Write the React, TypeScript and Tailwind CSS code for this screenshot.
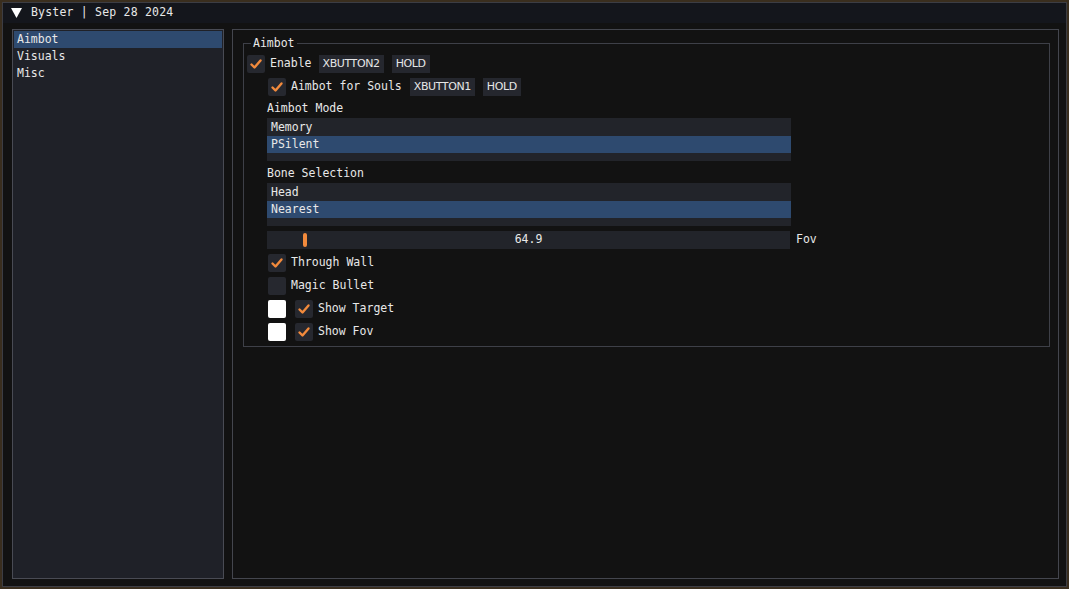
import React from 'react';

const mono = { fontFamily: '"DejaVu Sans Mono", "Liberation Mono", monospace' };

const Check: React.FC<{ on?: boolean }> = ({ on }) => (
  <div className="w-[18px] h-[18px] bg-[#26282f] rounded-[2px] flex items-center justify-center shrink-0">
    {on && (
      <svg width="14" height="14" viewBox="0 0 14 14">
        <polyline points="2.5,7.5 5.5,10.5 11.5,3.5" fill="none" stroke="#f28a3c" strokeWidth="2.4" strokeLinecap="round" strokeLinejoin="round" />
      </svg>
    )}
  </div>
);

const KeyBtn: React.FC<{ label: string }> = ({ label }) => (
  <div className="h-[18px] px-[4px] bg-[#25272e] flex items-center text-[11px] text-[#e6e6e6] font-['DejaVu_Sans',sans-serif] tracking-[-0.4px]">
    {label}
  </div>
);

const ListBox: React.FC<{ items: string[]; sel: number }> = ({ items, sel }) => (
  <div className="w-[524px] h-[43px] bg-[#22242a] pt-[1px]">
    {items.map((it, i) => (
      <div key={it} className={`h-[17px] px-[4px] flex items-center ${i === sel ? 'bg-[#2e4a6f]' : ''}`}>
        {it}
      </div>
    ))}
  </div>
);

export default function App() {
  const tabs = ['Aimbot', 'Visuals', 'Misc'];
  return (
    <div className="w-[1069px] h-[589px] bg-[#3a2e1e] p-[2px] overflow-hidden text-[11.5px] text-[#e8e8e8]" style={mono}>
      <div className="w-full h-full bg-[#121212] border border-[#3c3d44] flex flex-col">
        {/* title bar */}
        <div className="h-[20px] bg-[#14161c] flex items-center pl-[8px] gap-[9px] shrink-0">
          <svg width="11" height="10" viewBox="0 0 11 10" className="shrink-0">
            <polygon points="0,0 11,0 5.5,10" fill="#ffffff" />
          </svg>
          <span className="tracking-[0.2px]">Byster | Sep 28 2024</span>
        </div>

        <div className="flex flex-1 pt-[6px] pb-[7px] pl-[9px] pr-[7px] gap-[8px]">
          {/* sidebar */}
          <div className="w-[212px] bg-[#1f2128] border border-[#494b54] p-[1px] flex flex-col">
            {tabs.map((t, i) => (
              <div key={t} className={`h-[17px] px-[3px] flex items-center ${i === 0 ? 'bg-[#2e4a6f]' : ''}`}>
                {t}
              </div>
            ))}
          </div>

          {/* content */}
          <div className="flex-1 border border-[#44464e] pt-[13px] pl-[10px] pr-[8px]">
            <div className="relative border border-[#3e4048] h-[304px] pt-[11px] pl-[3px] flex flex-col gap-[5px]">
              <span className="absolute left-[7px] top-[-8px] bg-[#121212] px-[2px] leading-[14px]">Aimbot</span>

              <div className="flex items-center gap-[5px]">
                <Check on />
                <span>Enable</span>
                <div className="flex gap-[8px] ml-[2px]">
                  <KeyBtn label="XBUTTON2" />
                  <KeyBtn label="HOLD" />
                </div>
              </div>

              <div className="flex flex-col gap-[5px] pl-[21px]">
                <div className="flex items-center gap-[5px]">
                  <Check on />
                  <span>Aimbot for Souls</span>
                  <div className="flex gap-[8px] ml-[3px]">
                    <KeyBtn label="XBUTTON1" />
                    <KeyBtn label="HOLD" />
                  </div>
                </div>

                <div className="flex flex-col gap-[3px] -ml-[1px]">
                  <span className="leading-[14px]">Aimbot Mode</span>
                  <ListBox items={['Memory', 'PSilent']} sel={1} />
                </div>

                <div className="flex flex-col gap-[3px] -ml-[1px]">
                  <span className="leading-[14px]">Bone Selection</span>
                  <ListBox items={['Head', 'Nearest']} sel={1} />
                </div>

                <div className="flex items-center gap-[6px] -ml-[1px]">
                  <div className="relative w-[523px] h-[18px] bg-[#22242a] flex items-center justify-center">
                    <div className="absolute left-[36px] top-[2px] w-[4px] h-[14px] rounded-[2px] bg-[#f28a3c]" />
                    <span>64.9</span>
                  </div>
                  <span>Fov</span>
                </div>

                <div className="flex items-center gap-[5px]">
                  <Check on />
                  <span>Through Wall</span>
                </div>

                <div className="flex items-center gap-[5px]">
                  <Check />
                  <span>Magic Bullet</span>
                </div>

                <div className="flex items-center gap-[9px]">
                  <div className="w-[18px] h-[18px] bg-white rounded-[2px]" />
                  <div className="flex items-center gap-[5px]">
                    <Check on />
                    <span>Show Target</span>
                  </div>
                </div>

                <div className="flex items-center gap-[9px]">
                  <div className="w-[18px] h-[18px] bg-white rounded-[2px]" />
                  <div className="flex items-center gap-[5px]">
                    <Check on />
                    <span>Show Fov</span>
                  </div>
                </div>
              </div>
            </div>
          </div>
        </div>
      </div>
    </div>
  );
}
